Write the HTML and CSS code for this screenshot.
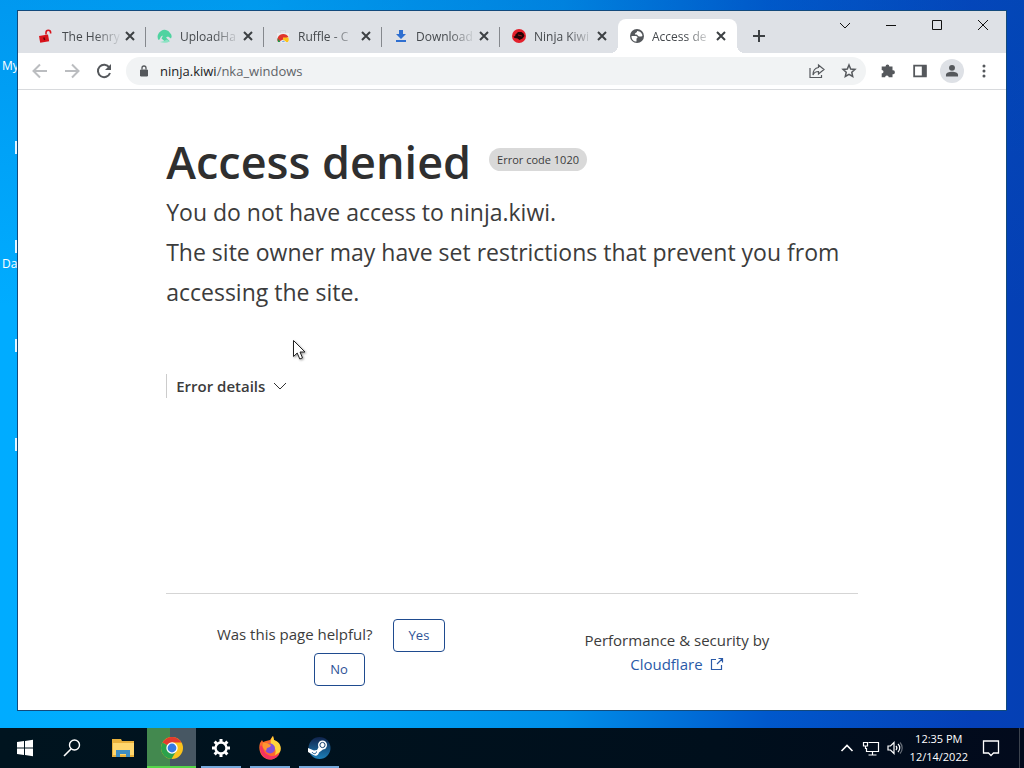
FILE: index.html
```html
<!DOCTYPE html>
<html lang="en">
<head>
<meta charset="utf-8">
<title>Access denied</title>
<link rel="stylesheet" href="styles.css">
</head>
<body>
<div class="desktop">
  <div class="shortcuts">
    <span class="shortcut-label shortcut-my">My</span>
    <span class="shortcut-edge edge-1"></span>
    <span class="shortcut-edge edge-2"></span>
    <span class="shortcut-label shortcut-data">Da</span>
    <span class="shortcut-edge edge-3"></span>
    <span class="shortcut-edge edge-4"></span>
  </div>

  <div class="workspace">
    <div class="window">
      <div class="tab-strip">
        <div class="tab">
          <svg class="favicon" viewBox="0 0 16 16"><path d="M1 8l9-1.500 1.200 6.700-9 1.500z" fill="#d8131b"/><path d="M8 6.500V4.500a2.300 2.300 0 0 1 4.600 0v1" fill="none" stroke="#d8131b" stroke-width="1.600"/><path d="M5.800 9.400l.9 2.500" stroke="#5c0507" stroke-width="1.500"/></svg>
          <span class="tab-title">The Henry</span>
          <button class="tab-close" aria-label="Close tab"><svg viewBox="0 0 16 16"><path d="M4 4l8 8M12 4l-8 8"/></svg></button>
        </div>
        <div class="tab">
          <svg class="favicon" viewBox="0 0 16 16"><path d="M2.500 12A6.500 6.500 0 0 1 5 3a6 6 0 0 1 9 2 4.500 4.500 0 0 1 1 5.500l-3-2-2 1 3.500 3.500-4.500.5-3.500-3 1.500-3-2 1-1.500 3z" fill="#4fd3a0"/><path d="M4 14c3 1.200 7 1 10-.5l-3-2-3 1.500z" fill="#8be3c3"/></svg>
          <span class="tab-title">UploadHa</span>
          <button class="tab-close" aria-label="Close tab"><svg viewBox="0 0 16 16"><path d="M4 4l8 8M12 4l-8 8"/></svg></button>
        </div>
        <div class="tab">
          <svg class="favicon" viewBox="0 0 16 16"><path d="M6.500 5V2.500h5V5" fill="none" stroke="#d3d5d8"/><path d="M3 5h12v9H3z" fill="#eceef0"/><path d="M4 14a5.200 5.200 0 0 1 0-5 6 6 0 0 1 10.500 0z" fill="#e0352b"/><path d="M3.500 10L6.500 14H4z" fill="#1b9c4b"/><path d="M9 9.500h5.500a5 5 0 0 1-.5 4.500H9z" fill="#fbc21a"/><path d="M7 14a2.500 2.500 0 0 1 4.600 0z" fill="#3479dd" stroke="#fff" stroke-width=".7"/></svg>
          <span class="tab-title">Ruffle - C</span>
          <button class="tab-close" aria-label="Close tab"><svg viewBox="0 0 16 16"><path d="M4 4l8 8M12 4l-8 8"/></svg></button>
        </div>
        <div class="tab">
          <svg class="favicon" viewBox="0 0 16 16"><path d="M7 2h4v4h3l-5 5-5-5h3zM4 12h10v2H4z" fill="#2f6fd0"/></svg>
          <span class="tab-title">Download</span>
          <button class="tab-close" aria-label="Close tab"><svg viewBox="0 0 16 16"><path d="M4 4l8 8M12 4l-8 8"/></svg></button>
        </div>
        <div class="tab">
          <svg class="favicon" viewBox="0 0 16 16"><circle cx="9" cy="8" r="7" fill="#e3202c"/><path d="M5 7l3-3h3.500l2 1.500 1 2.500-2 2.500-3 1.500-2-1.500-3-.5-1-1.500 2-.5z" fill="#240507"/><path d="M8 7l4 1" stroke="#a5141c"/></svg>
          <span class="tab-title">Ninja Kiwi</span>
          <button class="tab-close" aria-label="Close tab"><svg viewBox="0 0 16 16"><path d="M4 4l8 8M12 4l-8 8"/></svg></button>
        </div>
        <div class="tab tab-active">
          <svg class="favicon" viewBox="0 0 16 16"><circle cx="9" cy="8" r="7" fill="#55585c"/><path d="M3.500 8h4.500c2 .2 2 2 .5 2.500v3C5.500 13.500 3.300 11.500 3.500 8zM9 3c.5 2-2.500 1.500-2 3.500 2 0 2.500 0 3 1.500 1.500.5 2.500 1 4.400 0C14.500 5.500 12.500 3.300 9 3z" fill="#fff"/></svg>
          <span class="tab-title">Access de</span>
          <button class="tab-close" aria-label="Close tab"><svg viewBox="0 0 16 16"><path d="M4 4l8 8M12 4l-8 8"/></svg></button>
        </div>
        <button class="new-tab" aria-label="New tab"><svg viewBox="0 0 16 16"><path d="M8 2v12M2 8h12"/></svg></button>
        <div class="window-controls">
          <button aria-label="Search tabs"><svg viewBox="0 0 12 12"><path d="M1 4l5 5 5-5"/></svg></button>
          <button aria-label="Minimize"><svg viewBox="0 0 12 12"><path d="M1 6.500h10"/></svg></button>
          <button aria-label="Maximize"><svg viewBox="0 0 12 12"><path d="M1.500 1.500h9v9h-9z"/></svg></button>
          <button aria-label="Close"><svg viewBox="0 0 12 12"><path d="M1 1l10 10M11 1L1 11"/></svg></button>
        </div>
      </div>

      <div class="toolbar">
        <button class="tool tool-off" aria-label="Back"><svg viewBox="0 0 20 20"><path d="M17 10H4M10 3.500L3.500 10l6.500 6.500"/></svg></button>
        <button class="tool tool-off" aria-label="Forward"><svg viewBox="0 0 20 20"><path d="M3 10h13M10 3.500l6.500 6.500-6.500 6.500"/></svg></button>
        <button class="tool tool-reload" aria-label="Reload"><svg viewBox="0 0 20 20"><path d="M15.300 6.500A6.200 6.200 0 1 0 16 12"/><path d="M17 3v6h-6z" fill="#55585c" stroke="none"/></svg></button>
        <div class="omnibox">
          <svg class="lock" viewBox="0 0 16 16"><path d="M4.500 7h7v6h-7z" fill="#55585c" stroke="#55585c" stroke-linejoin="round"/><path d="M6 6.500V5a2 2 0 0 1 4 0v1.500" fill="none" stroke="#55585c" stroke-width="1.300"/></svg>
          <a class="address" href="#"><span class="host">ninja.kiwi</span>/nka_windows</a>
          <button class="omni-tool" aria-label="Share"><svg viewBox="0 0 18 18"><path d="M2 6v9.500h11.500V13M10.500 3l5.500 4.500-5.500 4.500V9.500C8 9.500 6 10.500 5 13c0-4 2-7 5.500-7.500z"/></svg></button>
          <button class="omni-tool" aria-label="Bookmark"><svg viewBox="0 0 18 18"><path d="M9 3l1.700 4 4.300.4-3.200 2.900.9 4.200L9 12.300 5.300 14.500l.9-4.200L3 7.400 7.300 7z" stroke-width="1.500"/></svg></button>
        </div>
        <div class="actions">
          <button class="action" aria-label="Extensions"><svg viewBox="0 0 20 20"><path d="M3 5h4.300a2.100 2.100 0 1 1 4.200 0H15v4.200a2.200 2.200 0 1 1 0 4.300V17h-4.200a2 2 0 1 0-4 0H3v-4.200a2 2 0 1 0 0-4z" fill="#55585c"/></svg></button>
          <button class="action" aria-label="Side panel"><svg viewBox="0 0 20 20"><path d="M3.500 4h13v12h-13z" fill="none" stroke="#55585c" stroke-width="2"/><path d="M12 4h5v12h-5z" fill="#55585c"/></svg></button>
          <button class="action profile" aria-label="Profile"><svg viewBox="0 0 20 20"><circle cx="10" cy="6.500" r="3.300" fill="#55585c"/><path d="M3.300 16v-1.800c0-2.200 3.300-3.300 6.700-3.300s6.700 1.100 6.700 3.300V16z" fill="#55585c"/></svg></button>
          <button class="action" aria-label="Menu"><svg viewBox="0 0 20 20"><g fill="#55585c"><circle cx="10" cy="4.500" r="1.700"/><circle cx="10" cy="10" r="1.700"/><circle cx="10" cy="15.500" r="1.700"/></g></svg></button>
        </div>
      </div>

      <main class="page">
        <div class="content">
          <header class="headline">
            <h1>Access denied</h1>
            <span class="code">Error code 1020</span>
          </header>
          <p class="lead">You do not have access to ninja.kiwi.</p>
          <p class="lead">The site owner may have set restrictions that prevent you from accessing the site.</p>
          <button class="details">Error details
            <svg viewBox="0 0 14 14"><path d="M1 4l6 6 6-6"/></svg>
          </button>
          <footer class="footer">
            <div class="feedback">
              <div class="feedback-row"><span>Was this page helpful?</span><button class="answer">Yes</button></div>
              <button class="answer">No</button>
            </div>
            <div class="credit">
              <span>Performance &amp; security by</span>
              <a href="#">Cloudflare <svg viewBox="0 0 14 14"><path d="M6 2.500H1.500v10h10V8M8.500 1.500h4v4M12.500 1.500L7 7"/></svg></a>
            </div>
          </footer>
        </div>
      </main>
    </div>
  </div>

  <div class="taskbar">
    <button class="task" aria-label="Start"><svg viewBox="0 0 24 24"><path d="M4 6l7-1v6.500H4zM12 4.900l8-1.100v7.700h-8zM4 12.500h7V19l-7-1zM12 12.500h8v7.700l-8-1.100z" fill="#fff"/></svg></button>
    <button class="task" aria-label="Search"><svg viewBox="2 0 24 24"><circle cx="14.500" cy="9" r="5" fill="none" stroke="#fff" stroke-width="1.400"/><path d="M11 13l-7 7" stroke="#fff" stroke-width="1.600"/></svg></button>
    <button class="task" aria-label="File Explorer"><svg viewBox="0 0 24 24"><path d="M1 3h9l1 2h12v16H1z" fill="#e9b13c"/><path d="M2 7h21v12H2z" fill="#ffd76e"/><path d="M5 21v-7h14v7h-4v-3H9v3z" fill="#3f8ec4"/></svg></button>
    <button class="task task-current" aria-label="Google Chrome"><svg viewBox="0 0 24 24"><circle cx="12" cy="12" r="11" fill="#fbc31c"/><path d="M12 12L2.500 6.500A11 11 0 0 1 21.500 6.500H12z" fill="#e23a2e"/><path d="M2.500 6.500A11 11 0 0 0 11.500 23L16.500 14.500 12 12z" fill="#2ba24c"/><circle cx="12" cy="12" r="5.700" fill="#fff"/><circle cx="12" cy="12" r="4.400" fill="#3579e2"/></svg></button>
    <button class="task task-open" aria-label="Settings"><svg viewBox="0 0 24 24"><circle cx="12" cy="12" r="5.500" fill="none" stroke="#fff" stroke-width="2.400"/><path d="M12 3v3M12 18v3M3 12h3M18 12h3M5.600 5.600l2.200 2.200M16.200 16.200l2.200 2.200M18.400 5.600l-2.200 2.200M7.800 16.200l-2.200 2.200" stroke="#fff" stroke-width="3"/></svg></button>
    <button class="task task-open" aria-label="Firefox"><svg viewBox="0 0 24 24"><path d="M2 7l2-3 1 2 3-1 4-1 3-4 1 4c5 2 7.500 7 6 11.500C20.500 21 16 24 11.500 23.500 4 23-.5 15 2 7z" fill="#ff6a2b"/><path d="M15 0l1 4c6 2 8 7 6 12l-5 3c2-6-1-8-4-11-1-3 0-6 2-8z" fill="#ffd43a"/><path d="M2 11c0 8 5 12.500 11 12.500 4-.5 7-3 8.500-6-4 3-8 3.500-12 1C5 16 6 12 3 9z" fill="#f43362"/><circle cx="12" cy="12.500" r="5" fill="#8150d7"/><path d="M5 7c3-1 5 1 8 2l-1 2-3 1-1 3C5 13 4 10 5 7z" fill="#ff9531"/></svg></button>
    <button class="task task-open" aria-label="Steam"><svg viewBox="0 0 24 24"><defs><linearGradient id="steam" x2="0" y2="1"><stop offset="0" stop-color="#10234c"/><stop offset="1" stop-color="#1c80b9"/></linearGradient></defs><circle cx="12.500" cy="12" r="11" fill="url(#steam)"/><circle cx="15.500" cy="9" r="4.500" fill="#fff"/><circle cx="15.500" cy="9" r="2.600" fill="#fff" stroke="#16406f"/><path d="M1 12l6 2.500 3-.5 2-3.500 4 3-4 3c-.5 3-3 4-5.500 2.500L1 16z" fill="#fff"/><path d="M5 16c1.500 2.500 4.500 2 4.500-.500" fill="none" stroke="#1b5a8d"/></svg></button>
    <div class="tray">
      <svg class="tray-icon" viewBox="0 0 18 18"><path d="M3.500 12L9 6.500l5.500 5.500" stroke-width="1.600"/></svg>
      <svg class="tray-icon" viewBox="0 0 18 18"><path d="M6.500 3.500h10v9H4.500V9M10.500 12.500V16M6.500 16h8M1.500 3.500h4V7h-4zM3.500 7v2.500h1"/></svg>
      <svg class="tray-icon tray-volume" viewBox="0 0 18 18"><path d="M2 7h2.500L8 3.500v11L4.500 11H2zM10 7a3 3 0 0 1 0 4M12 5a5.500 5.500 0 0 1 0 8"/><path d="M14 3.500a8 8 0 0 1 0 11" opacity=".4"/></svg>
      <div class="clock"><span>12:35 PM</span><span>12/14/2022</span></div>
      <button class="notices" aria-label="Notifications"><svg viewBox="0 0 18 18"><path d="M1.500 2h15v12h-5L9 16.500 6.500 14h-5z"/></svg></button>
    </div>
  </div>

  <svg class="pointer" viewBox="0 0 14 22"><path d="M1.500 1.500v16l3.700-3.500 2.600 6 2.700-1.200L8 13h5z" fill="#fff" stroke="#222"/></svg>
</div>
</body>
</html>
```
FILE: styles.css
```css
* { box-sizing: border-box; }
body {
  margin: 0;
  font-family: "Open Sans", "Noto Sans", sans-serif;
  color: #3c3c3c;
}
button {
  margin: 0;
  padding: 0;
  border: 0;
  background: none;
  font: inherit;
  color: inherit;
}
svg { display: block; flex: none; }
a { text-decoration: none; }
p, h1 { margin: 0; }

.desktop {
  position: relative;
  display: flex;
  flex-direction: column;
  min-height: 100vh;
  overflow: hidden;
  background:
    linear-gradient(to bottom, rgba(0, 90, 190, .24), rgba(0, 90, 190, 0) 40%),
    linear-gradient(to right, #00acff 0%, #00aefc 25%, #008ee8 55%, #0058cc 75%, #0540b8 95%, #0440b4 100%);
}

/* Desktop shortcuts, mostly covered by the window */
.shortcuts { position: absolute; inset: 0; color: #fff; }
.shortcut-label { position: absolute; left: 2px; font-size: 12px; line-height: 16px; }
.shortcut-my { top: 58px; }
.shortcut-data { top: 256px; }
.shortcut-edge { position: absolute; left: 15px; width: 3px; height: 13px; background: #e4f5ff; }
.edge-1 { top: 141px; }
.edge-2 { top: 240px; }
.edge-3 { top: 339px; }
.edge-4 { top: 438px; }

.workspace {
  position: relative;
  flex: 1;
  display: flex;
  padding: 10px 17px 17px;
}
.window {
  flex: 1;
  display: flex;
  flex-direction: column;
  min-width: 0;
  border: 1px solid #124a7c;
  background: #fff;
}

.tab-strip {
  display: flex;
  align-items: flex-end;
  height: 42px;
  padding-left: 10px;
  background: #dee1e6;
}
.tab {
  position: relative;
  flex: 0 1 118px;
  display: flex;
  align-items: center;
  min-width: 0;
  height: 34px;
  padding: 0 8px 0 10px;
  font-size: 12px;
  color: #45494d;
}
.tab:not(.tab-active)::after {
  content: "";
  position: absolute;
  right: 0;
  top: 8px;
  width: 1px;
  height: 20px;
  background: #85888d;
}
.tab:nth-child(5)::after { display: none; }
.tab-active { flex-basis: 119px; border-radius: 8px 8px 0 0; background: #fff; }
.tab-active::before,
.tab-active::after {
  content: "";
  position: absolute;
  bottom: 0;
  width: 8px;
  height: 8px;
}
.tab-active::before { left: -8px; background: radial-gradient(circle at 0 0, #dee1e6 8px, #fff 8px); }
.tab-active::after { right: -8px; background: radial-gradient(circle at 100% 0, #dee1e6 8px, #fff 8px); }
.favicon { width: 16px; height: 16px; }
.tab-title {
  flex: 1;
  min-width: 0;
  margin: 0 0 0 8px;
  white-space: nowrap;
  -webkit-mask-image: linear-gradient(to right, #000 55%, transparent);
  mask-image: linear-gradient(to right, #000 55%, transparent);
}
.tab-close svg { width: 16px; height: 16px; fill: none; stroke: #3c4043; stroke-width: 2; }
.new-tab { align-self: center; margin: 8px 0 0 14px; }
.new-tab svg { width: 16px; height: 16px; fill: none; stroke: #3c4043; stroke-width: 2; }
.window-controls { display: flex; align-self: flex-start; margin-left: auto; }
.window-controls button { display: grid; place-items: center; width: 46px; height: 28px; }
.window-controls svg { width: 12px; height: 12px; fill: none; stroke: #111; }

.toolbar {
  display: flex;
  align-items: center;
  height: 37px;
  padding: 0 10px 0 12px;
  border-bottom: 1px solid #d8dadd;
}
.tool { width: 20px; margin-right: 12px; }
.tool svg { width: 20px; height: 20px; fill: none; stroke: #55585c; stroke-width: 2; }
.tool-off svg { stroke: #bbbdc0; }
.omnibox {
  flex: 1;
  display: flex;
  align-items: center;
  min-width: 0;
  height: 28px;
  padding: 0 8px 0 10px;
  border-radius: 14px;
  background: #f1f3f4;
}
.lock { width: 16px; height: 16px; margin-right: 8px; }
.address { flex: 1; font-size: 13px; color: #5f6368; }
.host { color: #202124; }
.omni-tool { margin-left: 14px; }
.omni-tool svg { width: 18px; height: 18px; fill: none; stroke: #55585c; stroke-width: 1.2; }
.actions { display: flex; gap: 8px; margin-left: 10px; }
.action { display: grid; place-items: center; width: 24px; height: 24px; }
.action svg { width: 18px; height: 18px; }
.profile { border-radius: 50%; background: #dee1e6; }

.page { flex: 1; display: flex; justify-content: center; }
.content { width: 70%; display: flex; flex-direction: column; padding-top: 42px; }
.headline { display: flex; align-items: flex-start; gap: 18px; }
h1 { font-size: 45px; line-height: 60px; font-weight: 600; color: #2f2f2f; }
.code {
  margin-top: 16px;
  padding: 0 8px;
  border-radius: 12px;
  background: #d9d9d9;
  font-size: 11px;
  line-height: 23px;
}
.lead { font-size: 23px; line-height: 40px; }
.details {
  align-self: flex-start;
  display: flex;
  align-items: center;
  gap: 8px;
  margin-top: 62px;
  padding-left: 9px;
  border-left: 1px solid #ccc;
  font-size: 15px;
  font-weight: 600;
  line-height: 24px;
}
.details svg { width: 14px; height: 14px; fill: none; stroke: #313131; }
.footer {
  display: grid;
  grid-template-columns: 1fr 1fr;
  margin-top: auto;
  padding: 25px 0 24px;
  border-top: 1px solid #d5d5d5;
  font-size: 15px;
  line-height: 24px;
}
.feedback { display: flex; flex-direction: column; align-items: center; gap: 1px; }
.feedback-row { display: flex; align-items: baseline; gap: 20px; padding-right: 16px; }
.answer {
  min-width: 51px;
  padding: 0 15px;
  border: 1px solid #1f4b8f;
  border-radius: 4px;
  font-size: 13px;
  line-height: 31px;
  color: #2c5296;
}
.credit {
  display: flex;
  flex-direction: column;
  align-items: center;
  padding: 9px 16px 0 0;
}
.credit a { display: flex; align-items: center; gap: 7px; color: #2a5aa8; }
.credit svg { width: 14px; height: 14px; fill: none; stroke: #2a5aa8; stroke-width: 1.200; }

.taskbar {
  position: relative;
  display: flex;
  height: 40px;
  background: linear-gradient(to right, #00141f, #000f1c 70%, #020a1c);
  color: #fff;
}
.task { display: grid; place-items: center; width: 49px; height: 40px; }
.task svg { width: 24px; height: 24px; }
.task-current {
  background: linear-gradient(to right, #43894f 46%, #475763 46%);
  box-shadow: inset 0 -2px #55d649;
}
.task-open {
  background: linear-gradient(#76a9dc, #76a9dc) bottom center / 40px 2px no-repeat;
}
.tray {
  display: flex;
  align-items: center;
  gap: 6px;
  margin: 0 4px 0 auto;
  padding-right: 19px;
  border-right: 1px solid #3c434e;
}
.tray-icon { width: 18px; height: 18px; fill: none; stroke: #fff; stroke-width: 1.200; }
.clock {
  display: flex;
  flex-direction: column;
  align-items: center;
  margin: 0 8px 0 0;
  font-size: 11px;
  line-height: 18px;
}
.notices svg { width: 18px; height: 18px; fill: none; stroke: #fff; stroke-width: 1.300; }

.pointer { position: absolute; left: 292px; top: 339px; width: 14px; height: 22px; filter: drop-shadow(1px 1px 1px rgba(0, 0, 0, .4)); }
```
